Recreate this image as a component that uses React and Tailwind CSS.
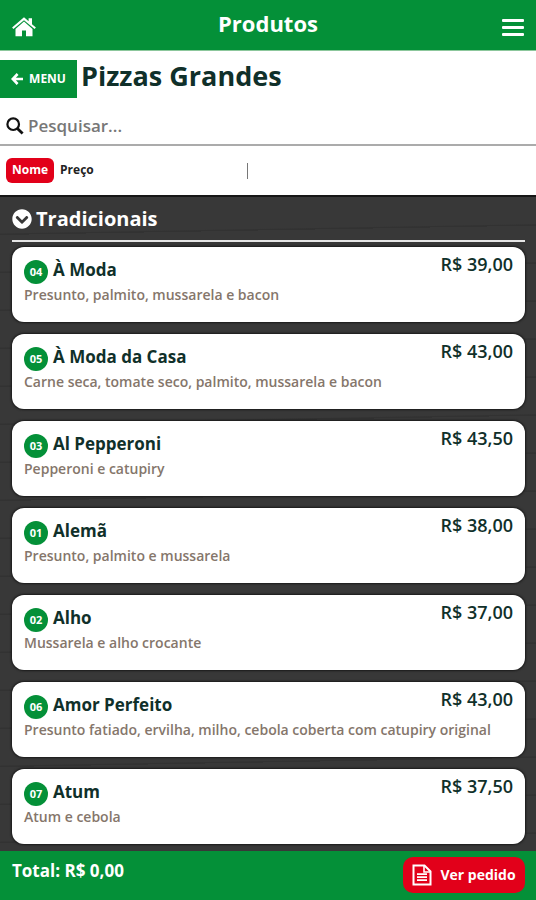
import React, { useState } from 'react';
import { FaChevronCircleDown } from 'react-icons/fa';

const products = [
  { code: '04', name: 'À Moda', description: 'Presunto, palmito, mussarela e bacon', price: 39 },
  { code: '05', name: 'À Moda da Casa', description: 'Carne seca, tomate seco, palmito, mussarela e bacon', price: 43 },
  { code: '03', name: 'Al Pepperoni', description: 'Pepperoni e catupiry', price: 43.5 },
  { code: '01', name: 'Alemã', description: 'Presunto, palmito e mussarela', price: 38 },
  { code: '02', name: 'Alho', description: 'Mussarela e alho crocante', price: 37 },
  { code: '06', name: 'Amor Perfeito', description: 'Presunto fatiado, ervilha, milho, cebola coberta com catupiry original', price: 43 },
  { code: '07', name: 'Atum', description: 'Atum e cebola', price: 37.5 },
];

const money = (value) => `R$ ${value.toFixed(2).replace('.', ',')}`;

function HomeIcon() {
  return (
    <svg viewBox="0 0 24 20" className="h-5 w-6" fill="#fff" aria-hidden="true">
      <path d="M12 4.6L20.5 12V19.2H14V13.5H10V19.2H3.5V12Z" />
      <path d="M12 0.2L16.6 4.2V1.2H20V7.2L23.9 10.6L22.6 12.1L12 3.2L1.4 12.1L0.1 10.6Z" />
    </svg>
  );
}

function ArrowLeftIcon() {
  return (
    <svg viewBox="0 0 12 12" className="size-3" fill="none" stroke="#fff" strokeWidth="2.6" aria-hidden="true">
      <path d="M6.6 1L1.8 6L6.6 11M2 6H12" />
    </svg>
  );
}

function SearchIcon() {
  return (
    <svg viewBox="0 0 18 18" className="size-[18px] shrink-0" fill="none" stroke="#111" aria-hidden="true">
      <circle cx="7.2" cy="7.2" r="5.8" strokeWidth="2.2" />
      <path d="M11.4 11.4L16.6 16.6" strokeWidth="2.8" />
    </svg>
  );
}

function OrderIcon() {
  return (
    <svg viewBox="0 0 20 22" className="h-[22px] w-5" fill="none" stroke="#fff" strokeWidth="2" aria-hidden="true">
      <path d="M1.5 1.5H12.5L18.5 7.5V20.5H1.5Z" />
      <path d="M12 1.5V8H18.5" strokeWidth="1.6" />
      <path d="M5 10.2H15M5 13.2H15M5 16.2H15" strokeWidth="1.7" />
    </svg>
  );
}

function ProductCard({ product }) {
  return (
    <li className="min-h-[75px] rounded-xl bg-white px-3 pt-[7px] pb-2 shadow-[0_0_2px_1px_#1a1a1a]">
      <div className="flex items-start justify-between">
        <div className="flex items-start gap-[5px] pt-1">
          <span className="mt-[2px] flex size-6 shrink-0 items-center justify-center rounded-full bg-[#049038] text-[11px] font-bold text-white">
            {product.code}
          </span>
          <h3 className="text-[17px] leading-6 font-bold text-[#10302a]">{product.name}</h3>
        </div>
        <span className="shrink-0 text-[18px] leading-5 font-semibold text-[#10302a]">{money(product.price)}</span>
      </div>
      <p className="mt-px text-[14px] leading-5 font-semibold text-[#85766b]">{product.description}</p>
    </li>
  );
}

export default function App() {
  const [search, setSearch] = useState('');
  const [order, setOrder] = useState('name');

  const visible = products.filter((p) => p.name.toLowerCase().includes(search.toLowerCase()));
  if (order === 'price') visible.sort((a, b) => a.price - b.price);

  return (
    <div className="flex min-h-screen flex-col bg-white font-['Open_Sans',sans-serif]">
      {/* topo */}
      <header className="grid h-[51px] grid-cols-[1fr_auto_1fr] items-center border-b border-[#8cc79c] bg-[#049038] px-3 text-white">
        <button type="button" aria-label="Início" className="justify-self-start pt-1">
          <HomeIcon />
        </button>
        <h1 className="pb-1 text-[22px] leading-7 font-bold">Produtos</h1>
        <button type="button" aria-label="Abrir menu" className="flex flex-col gap-1 justify-self-end pt-1">
          <span className="h-[3px] w-[22px] rounded-[1px] bg-white" />
          <span className="h-[3px] w-[22px] rounded-[1px] bg-white" />
          <span className="h-[3px] w-[22px] rounded-[1px] bg-white" />
        </button>
      </header>

      {/* categoria */}
      <div className="flex h-[57px] items-start gap-1 pt-[9px]">
        <a href="#menu" className="flex h-[38px] w-[77px] items-center justify-center gap-1.5 bg-[#049038] text-xs font-bold text-white">
          <ArrowLeftIcon />
          MENU
        </a>
        <h2 className="text-[27px] leading-8 font-bold text-[#10302a]">Pizzas Grandes</h2>
      </div>

      <label className="flex h-[38px] items-center gap-1 border-b-2 border-[#ababab] px-1.5">
        <SearchIcon />
        <input
          type="text"
          value={search}
          onChange={(e) => setSearch(e.target.value)}
          placeholder="Pesquisar..."
          aria-label="Pesquisar"
          className="w-full text-[17px] font-semibold text-[#10302a] placeholder:text-[#777] focus:outline-none"
        />
      </label>

      {/* ordenação */}
      <div className="flex h-[49px] items-center px-1.5 text-[12px] font-bold">
        <div className="flex w-[241px] gap-1.5">
          <button
            type="button"
            onClick={() => setOrder('name')}
            className={`h-[25px] rounded-md pb-0.5 ${order === 'name' ? 'bg-[#e2001a] px-1.5 text-white' : 'text-[#222]'}`}
          >
            Nome
          </button>
          <button
            type="button"
            onClick={() => setOrder('price')}
            className={`h-[25px] rounded-md pb-0.5 ${order === 'price' ? 'bg-[#e2001a] px-1.5 text-white' : 'text-[#222]'}`}
          >
            Preço
          </button>
        </div>
        <span className="h-4 w-px bg-[#777]" />
      </div>

      {/* lista */}
      <main className="flex-1 border-t-2 border-[#161616] bg-[#383838] bg-[repeating-linear-gradient(179deg,transparent_0_36px,#323232_37px_38px)] pr-[11px] pb-1.5 pl-3">
        <section>
          <h2 className="mb-[5px] h-[45px] border-b-2 border-[#e5e5e5] pt-2 text-white">
            <button type="button" className="flex items-center gap-1 text-[20px] leading-7 font-bold">
              <FaChevronCircleDown size={20} />
              Tradicionais
            </button>
          </h2>
          <ul className="flex flex-col gap-3">
            {visible.map((p) => (
              <ProductCard key={p.code} product={p} />
            ))}
          </ul>
        </section>
      </main>

      {/* total do pedido */}
      <footer className="sticky bottom-0 flex h-[49px] items-start justify-between bg-[#049038] pr-[11px] pl-3 text-white">
        <p className="pt-2 text-[17px] leading-6 font-bold">Total: {money(0)}</p>
        <button type="button" className="mt-1.5 flex h-9 w-[122px] items-center justify-center gap-2 rounded-[10px] bg-[#e2001a] text-sm font-bold">
          <OrderIcon />
          Ver pedido
        </button>
      </footer>
    </div>
  );
}
